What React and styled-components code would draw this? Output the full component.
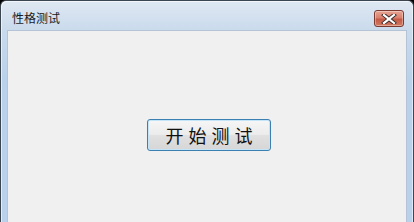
import React from 'react'
import styled, { createGlobalStyle } from 'styled-components'

const GlobalStyle = createGlobalStyle`
    html, body {
        margin: 0;
        padding: 0;
        background: #000;
        overflow: hidden;
    }
`;

const App = () => {
    const title = "性格测试"
    return (
        <>
            <GlobalStyle />
            <Window>
                <TitleBar>
                    <Title>{title}</Title>
                    <CloseButton aria-label="close">
                        <svg width="16" height="10" viewBox="0 0 16 10">
                            <path d="M3 1 L13 9 M13 1 L3 9" stroke="#3a2a2a" strokeWidth="4" strokeLinecap="square" />
                            <path d="M3 1 L13 9 M13 1 L3 9" stroke="#fff" strokeWidth="2.2" strokeLinecap="square" />
                        </svg>
                    </CloseButton>
                </TitleBar>
                <Frame>
                    <Client>
                        <StartButton>开始测试</StartButton>
                    </Client>
                </Frame>
            </Window>
        </>
    );
}

const Window = styled.div`
    width: 414px;
    height: 222px;
    box-sizing: border-box;
    display: flex;
    flex-direction: column;
    border: 1px solid #3c4650;
    border-bottom: none;
    border-radius: 6px 6px 0 0;
    background: linear-gradient(to bottom, #dfe8f2 0px, #c9daec 30px, #b9d1ea 80px, #b9d1ea 100%);
    box-shadow: inset 1px 1px 0 rgba(255,255,255,0.6), inset -1px 0 0 rgba(255,255,255,0.5);
`;

const TitleBar = styled.div`
    height: 29px;
    display: flex;
    align-items: flex-start;
    justify-content: space-between;
    padding: 0 9px 0 11px;
`;

const Title = styled.span`
    font-family: "Noto Sans CJK SC", "Noto Sans", sans-serif;
    font-size: 12px;
    line-height: 14px;
    margin-top: 10px;
    color: #1a1a1a;
`;

const CloseButton = styled.button`
    width: 30px;
    height: 17px;
    margin-top: 9px;
    padding: 0;
    display: flex;
    align-items: center;
    justify-content: center;
    border: 1px solid #7a3a32;
    border-radius: 3px;
    background: linear-gradient(to bottom, #e8a493 0%, #d9806d 45%, #c35a45 55%, #d27a62 100%);
    box-shadow: inset 0 0 0 1px rgba(255,255,255,0.35);
`;

const Frame = styled.div`
    flex: 1;
    display: flex;
    padding: 0 6px;
`;

const Client = styled.div`
    flex: 1;
    display: flex;
    align-items: flex-start;
    padding: 88px 0 0 139px;
    background: #f0f0f0;
    border: 1px solid #b4c4d6;
    border-bottom: none;
`;

const StartButton = styled.button`
    width: 124px;
    height: 32px;
    box-sizing: border-box;
    border: 1px solid #3c7fb1;
    border-radius: 3px;
    background: linear-gradient(to bottom, #f6f6f6 0%, #ececec 48%, #e0e0e0 52%, #d6d6d6 100%);
    box-shadow: inset 0 0 0 1px #c4e4f8;
    font-family: "Noto Sans CJK SC", sans-serif;
    font-size: 18px;
    letter-spacing: 5px;
    padding: 0 0 0 5px;
    color: #111;
    cursor: pointer;
`;

export default App;
